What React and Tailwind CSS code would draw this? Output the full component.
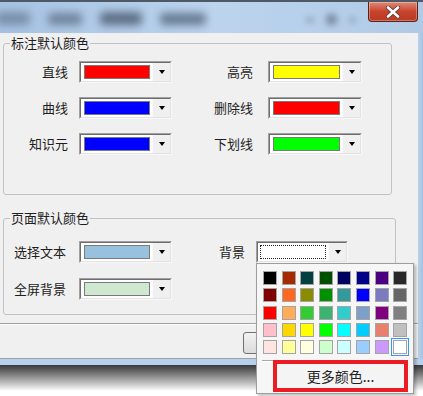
import React from "react";

const palette = [
  ["#000000", "#a52a00", "#004040", "#005000", "#000060", "#00008b", "#4b0082", "#282828"],
  ["#800000", "#ff6820", "#8b8b00", "#009000", "#339999", "#0000ff", "#7b7bc0", "#666666"],
  ["#ff0000", "#ffad5b", "#32cd32", "#3cb371", "#33cccc", "#7da0c8", "#800080", "#808080"],
  ["#ffc0cb", "#ffd700", "#ffff00", "#00ff00", "#00ffff", "#00ccff", "#e9806e", "#c0c0c0"],
  ["#ffe4e1", "#ffff99", "#ffffe0", "#ccffcc", "#ccffff", "#99ccff", "#cc99ff", "#ffffff"],
];

const ColorCombo = ({ color, width = "w-[93px]", focus = false }) => (
  <div className={`flex h-[22px] ${width} border border-t-[#a0a0a0] border-l-[#a0a0a0] border-b-[#f8f8f8] border-r-[#f8f8f8]`}>
    <div className="flex flex-1 border border-t-[#6e6e6e] border-l-[#6e6e6e] border-b-[#e3e3e3] border-r-[#e3e3e3] bg-white">
      {focus ? (
        <div className="my-[2px] ml-[2px] mr-[2px] flex-1 border border-dotted border-[#222] p-[1px]">
          <div className="h-full w-full bg-white" />
        </div>
      ) : (
        <div className="my-[2px] ml-[3px] mr-[2px] flex-1 border border-[#7a7a7a]" style={{ backgroundColor: color }} />
      )}
      <div className="flex w-[18px] items-center justify-center border-l border-[#fafafa] bg-[#f0f0f0]">
        <div className="h-0 w-0 border-l-[3.5px] border-r-[3.5px] border-t-[4px] border-l-transparent border-r-transparent border-t-black" />
      </div>
    </div>
  </div>
);

const Row = ({ left, leftColor, leftW, right, rightColor, rightW, rightGap, leftGap, comboW2, comboW1 = "w-[93px]", focus }) => (
  <div className="flex items-center">
    <span className={`${leftW} text-right`}>{left}</span>
    <div className={leftGap}>
      <ColorCombo color={leftColor} width={comboW1} />
    </div>
    {right && (
      <>
        <span className={`${rightW} text-right`}>{right}</span>
        <div className={rightGap}>
          <ColorCombo color={rightColor} width={comboW2} focus={focus} />
        </div>
      </>
    )}
  </div>
);

export default function App() {
  return (
    <div className="relative h-[396px] w-[423px] overflow-hidden bg-white font-['Noto_Sans_CJK_SC','Noto_Sans',sans-serif] text-[13px] leading-[16px] text-[#1e1e1e]">
      {/* title bar */}
      <div className="relative flex h-[33px] justify-end border-t-2 border-[#4d5966] bg-gradient-to-r from-[#a7c3e3] via-[#bcd4ee] to-[#b0cae6]">
        <div className="absolute left-[-4px] top-[10px] flex items-center gap-[18px] blur-[4px]">
          <div className="h-[13px] w-[34px] rounded bg-[#5a6b80]/60" />
          <div className="h-[12px] w-[34px] rounded bg-[#4f6074]/65" />
          <div className="h-[13px] w-[42px] rounded bg-[#3f4f62]/75" />
          <div className="h-[12px] w-[46px] rounded bg-[#45566a]/70" />
        </div>
        <div className="absolute left-[306px] top-[12px] flex items-center gap-[12px] blur-[3px]">
          <div className="h-[4px] w-[8px] rounded bg-[#6a7a8c]/70" />
          <div className="h-[11px] w-[11px] rounded bg-[#5d6d80]/65" />
          <div className="h-[6px] w-[7px] rounded bg-[#7a8a9c]/60" />
        </div>
        <div className="relative mr-[5px] flex h-[20px] w-[50px] items-center justify-center rounded-b-[4px] border border-t-0 border-[#5a2218] bg-gradient-to-b from-[#dc8a78] via-[#c8422c] to-[#b83a24] shadow-[inset_0_0_0_1px_rgba(255,255,255,0.3)]">
          <svg width="16" height="12" viewBox="0 0 16 12">
            <path d="M3 1.5 L13 10.5 M13 1.5 L3 10.5" stroke="#5a3a36" strokeWidth="4.2" strokeLinecap="round" />
            <path d="M3 1.5 L13 10.5 M13 1.5 L3 10.5" stroke="#ffffff" strokeWidth="2.6" strokeLinecap="round" />
          </svg>
        </div>
      </div>

      {/* client + right frame */}
      <div className="flex">
        <div className="flex h-[326px] w-[418px] flex-col border-b border-[#a0a0a0] bg-[#f0f0f0] px-[3px]">
          <fieldset className="mt-[2px] w-[389px] rounded-[3px] border border-[#c2c2c2] pb-[39px] pt-[10px]">
            <legend className="ml-[6px] px-[1px]">标注默认颜色</legend>
            <div className="flex flex-col gap-[14px]">
              <Row left="直线" leftColor="#ff0000" leftW="w-[64px]" leftGap="ml-[11px]" right="高亮" rightColor="#ffff00" rightW="w-[81px]" rightGap="ml-[15px]" comboW2="w-[94px]" />
              <Row left="曲线" leftColor="#0000ff" leftW="w-[64px]" leftGap="ml-[11px]" right="删除线" rightColor="#ff0000" rightW="w-[81px]" rightGap="ml-[15px]" comboW2="w-[94px]" />
              <Row left="知识元" leftColor="#0000ff" leftW="w-[64px]" leftGap="ml-[11px]" right="下划线" rightColor="#00ff00" rightW="w-[81px]" rightGap="ml-[15px]" comboW2="w-[94px]" />
            </div>
          </fieldset>

          <fieldset className="mt-[15px] w-[393px] rounded-[3px] border border-[#c2c2c2] pb-[14px] pt-[15px]">
            <legend className="ml-[6px] px-[1px]">页面默认颜色</legend>
            <div className="flex flex-col gap-[15px]">
              <Row left="选择文本" leftColor="#98c1dd" leftW="w-[62px]" leftGap="ml-[13px]" right="背景" rightW="w-[73px]" rightGap="ml-[11px]" comboW2="w-[92px]" focus />
              <Row left="全屏背景" leftColor="#cee9d0" leftW="w-[62px]" leftGap="ml-[13px]" />
            </div>
          </fieldset>

          <div className="-mx-[3px] mt-[8px] border-t border-b border-t-[#a0a0a0] border-b-white" />
          <div className="mt-[7px] flex gap-[8px] pl-[240px]">
            <div className="flex h-[22px] w-[75px] items-center justify-center rounded-[3px] border border-[#707070] bg-gradient-to-b from-[#f2f2f2] to-[#dcdcdc]">确定</div>
            <div className="flex h-[22px] w-[75px] items-center justify-center rounded-[3px] border border-[#707070] bg-gradient-to-b from-[#f2f2f2] to-[#dcdcdc]">取消</div>
          </div>
        </div>
        <div className="h-[326px] flex-1 bg-gradient-to-r from-[#b9d2ec] to-[#a4c2e2]" />
      </div>

      {/* bottom frame + shadow */}
      <div className="h-[6px] bg-[#b6d0ee]" />
      <div className="h-[26px] bg-gradient-to-b from-[#3a3a3a] via-[#9a9a9a] to-white" />

      {/* colour popup */}
      <div className="absolute left-[256px] top-[263px] h-[131px] w-[158px] border border-[#9d9d9d] bg-[#f6f6f6] shadow-[2px_2px_3px_rgba(0,0,0,0.25)]">
        <div className="grid grid-cols-[repeat(8,14px)] gap-x-[4.6px] gap-y-[3.3px] pl-[6px] pt-[7px]">
          {palette.flat().map((c, i) => (
            <div
              key={i}
              className={`h-[14px] w-[14px] border border-[#a4a4a4] ${i === 39 ? "outline outline-1 outline-offset-[1px] outline-[#3a96f0]" : ""}`}
              style={{ backgroundColor: c }}
            />
          ))}
        </div>
        <div className="mx-[5px] mt-[6px] border-t border-b border-t-[#a8a8a8] border-b-white" />
        <div className="ml-[16px] -mt-[2px] flex h-[32px] w-[135px] items-center justify-center border-[4px] border-[#ec1c24] bg-[#f4f4f4] text-[14px] text-[#222]">
          更多颜色...
        </div>
      </div>
    </div>
  );
}
